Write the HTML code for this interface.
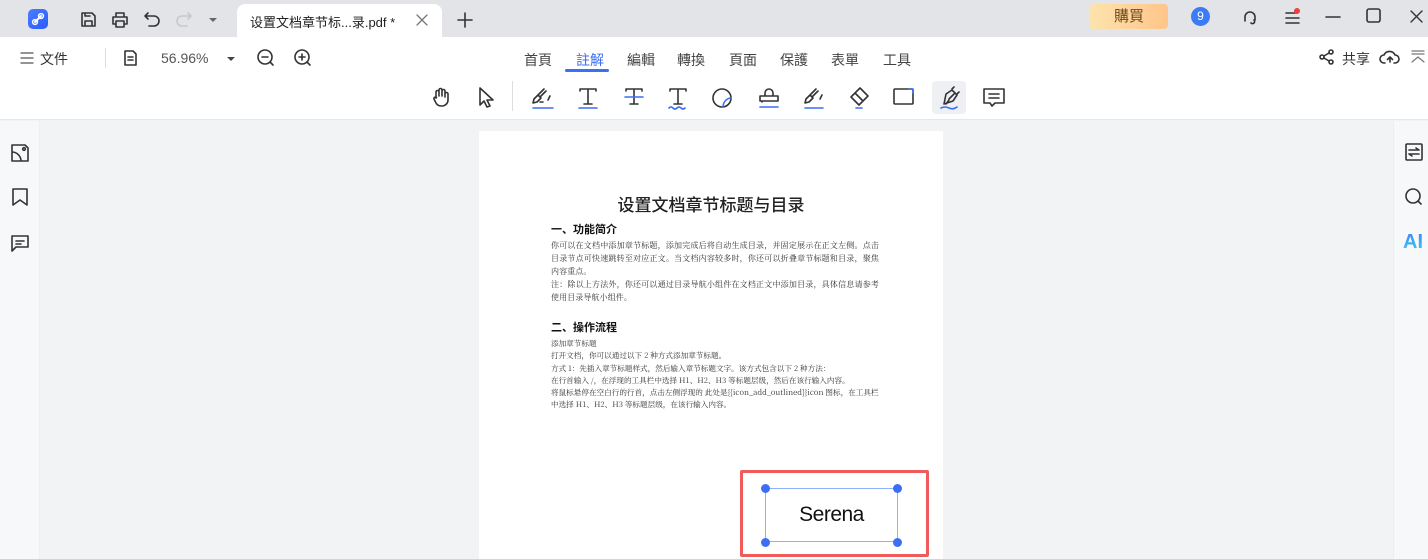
<!DOCTYPE html>
<html><head><meta charset="utf-8"><style>
*{margin:0;padding:0;box-sizing:border-box}
body{width:1428px;height:559px;overflow:hidden;background:#f2f3f5;font-family:"Liberation Sans","Noto Sans CJK SC",sans-serif;position:relative;color:#333}
.abs{position:absolute}
svg{position:absolute;fill:none;stroke:#333;stroke-width:1.6;stroke-linecap:round;stroke-linejoin:round}
.tb{top:0;left:0;width:1428px;height:37px;background:#e3e4e8}
.tab{left:237px;top:4px;width:205px;height:33px;background:#fff;border-radius:8px 8px 0 0;font-size:13px;color:#222;padding:8px 0 0 13px}
.bar{top:37px;left:0;width:1428px;height:83px;background:#fff;border-bottom:1px solid #e6e6e6}
.menu span{position:absolute;top:50px;font-size:14px;color:#444}
.doc{font-family:"Noto Serif CJK SC","Liberation Serif",serif;color:#333}
</style></head><body>
<div class="abs tb"></div>
<div class="abs" style="left:28px;top:9px;width:20px;height:20px;border-radius:5px;background:linear-gradient(135deg,#4a7dff,#2a5bff)"></div>
<svg style="left:28px;top:9px" width="20" height="20"><path d="M7 13 L13 7" stroke="#fff" stroke-width="2"/><circle cx="13" cy="7" r="2.4" stroke="#fff" stroke-width="1.5"/><circle cx="7" cy="13" r="2.4" stroke="#fff" stroke-width="1.5"/></svg>
<svg style="left:80px;top:11px" width="17" height="17"><path d="M2 2h10l3 3v10H2z M5 15v-5h7v5 M5 2v3h5"/></svg>
<svg style="left:111px;top:11px" width="18" height="17"><path d="M5 6V2h8v4 M2 6h14v7h-3 M5 13H2V6 M5 10h8v6H5z"/></svg>
<svg style="left:143px;top:11px" width="18" height="16"><path d="M5 2L2 5l3 3 M2 5h9a5 5 0 010 10H6"/></svg>
<svg style="left:175px;top:11px" width="18" height="16"><path d="M13 2l3 3-3 3 M16 5H7a5 5 0 000 10h5" stroke="#c8c8cc"/></svg>
<div class="abs" style="left:209px;top:18px;border:4px solid transparent;border-top:4px solid #666"></div>
<div class="abs tab">设置文档章节标...录.pdf *</div>
<svg style="left:416px;top:14px" width="12" height="12"><path d="M1 1l10 10M11 1L1 11" stroke="#777" stroke-width="1.3"/></svg>
<svg style="left:456px;top:11px" width="18" height="18"><path d="M9 2v14M2 9h14" stroke-width="1.6"/></svg>
<div class="abs" style="left:1090px;top:4px;width:78px;height:25px;border-radius:4px;background:linear-gradient(90deg,#fde3ac,#ffc58a);font-size:15px;color:#6b4a1e;text-align:center;line-height:25px">購買</div>
<div class="abs" style="left:1191px;top:7px;width:19px;height:19px;border-radius:50%;background:#3b7bf6;color:#fff;font-size:12px;text-align:center;line-height:19px">9</div>
<svg style="left:1241px;top:8px" width="18" height="18"><path d="M4 13V9a5 5 0 0110 0v3 M13 12a2 2 0 01-3 3"/></svg>
<svg style="left:1284px;top:8px" width="18" height="18"><path d="M2 5h10M2 10h13M2 15h13"/></svg>
<div class="abs" style="left:1294px;top:8px;width:6px;height:6px;border-radius:50%;background:#f03e3e"></div>
<svg style="left:1324px;top:8px" width="18" height="18"><path d="M2 9h14"/></svg>
<svg style="left:1366px;top:8px" width="16" height="16"><rect x="1" y="1" width="13" height="13" rx="2"/></svg>
<svg style="left:1410px;top:10px" width="13" height="13"><path d="M1 1l11 11M12 1L1 12" stroke-width="1.4"/></svg>

<div class="abs bar"></div>
<svg style="left:20px;top:51px" width="14" height="14"><path d="M1 2h12M1 7h12M1 12h12" stroke="#555" stroke-width="1.3"/></svg>
<div class="abs" style="left:40px;top:49px;font-size:14px;color:#333">文件</div>
<div class="abs" style="left:105px;top:48px;width:1px;height:20px;background:#ddd"></div>
<svg style="left:123px;top:50px" width="16" height="17"><path d="M2 1h8l3 3v11H2z M5 7h5M5 10h5"/></svg>
<div class="abs" style="left:161px;top:50px;font-size:14px;color:#555">56.96%</div>
<div class="abs" style="left:227px;top:57px;border:4px solid transparent;border-top:4px solid #444"></div>
<svg style="left:256px;top:48px" width="20" height="20"><circle cx="9" cy="9" r="7"/><path d="M6 9h6M14 14l3 3"/></svg>
<svg style="left:293px;top:48px" width="20" height="20"><circle cx="9" cy="9" r="7"/><path d="M6 9h6M9 6v6M14 14l3 3"/></svg>
<div class="menu">
<span style="left:524px">首頁</span><span style="left:576px;color:#3b6ff5">註解</span><span style="left:627px">編輯</span><span style="left:677px">轉換</span><span style="left:729px">頁面</span><span style="left:780px">保護</span><span style="left:831px">表單</span><span style="left:883px">工具</span>
</div>
<div class="abs" style="left:565px;top:69px;width:44px;height:3px;background:#3b6ff5;border-radius:2px"></div>
<svg style="left:1319px;top:49px" width="16" height="17"><circle cx="12" cy="3" r="2"/><circle cx="3" cy="8" r="2"/><circle cx="12" cy="13" r="2"/><path d="M5 7l5-3M5 9l5 3"/></svg>
<div class="abs" style="left:1342px;top:49px;font-size:14px;color:#333">共享</div>
<svg style="left:1379px;top:48px" width="22" height="18"><path d="M6 15H5a4 4 0 010-8 6 6 0 0111 0 4 4 0 010 8h-1 M11 14V9M8.5 11.5L11 9l2.5 2.5"/></svg>
<svg style="left:1411px;top:50px" width="14" height="14"><path d="M1 1h12M1 4h12M1 12l6-5 6 5" stroke="#777" stroke-width="1.2"/></svg>

<svg style="left:430px;top:86px" width="22" height="22"><path d="M6 12V6a1.5 1.5 0 013 0v4V4a1.5 1.5 0 013 0v6V5a1.5 1.5 0 013 0v6V8a1.5 1.5 0 013 0v6a6 6 0 01-6 6h-1a6 6 0 01-5-3l-2-4a1.5 1.5 0 012.5-1.5z"/></svg>
<svg style="left:476px;top:86px" width="20" height="24"><path d="M4 2v17l4-4 3 6 3-1-3-6h6z"/></svg>
<div class="abs" style="left:512px;top:81px;width:1px;height:30px;background:#ddd"></div>
<svg style="left:530px;top:85px" width="26" height="26"><path d="M3 18l4-1 4-4-3-3-4 4z M8 10l6-6M10 12l6-6 M13 17h-3 M18 15l2-4" /><path d="M3 23h20" stroke="#3b6ff5"/></svg>
<svg style="left:576px;top:85px" width="24" height="26"><path d="M4 4h16M12 4v15M8 19h8M4 4v2M20 4v2"/><path d="M3 23h18" stroke="#3b6ff5"/></svg>
<svg style="left:622px;top:85px" width="24" height="26"><path d="M4 4h16M12 4v15M8 19h8M4 4v2M20 4v2"/><path d="M3 12h18" stroke="#3b6ff5"/></svg>
<svg style="left:666px;top:85px" width="24" height="26"><path d="M4 4h16M12 4v15M8 19h8M4 4v2M20 4v2"/><path d="M3 23q2-2 4 0t4 0 4 0 4 0" stroke="#3b6ff5"/></svg>
<svg style="left:711px;top:86px" width="24" height="24"><path d="M20 12a9 9 0 10-9 9c5 0 9-4 9-9"/><path d="M12 21c0-5 4-9 8-9" stroke="#3b6ff5"/></svg>
<svg style="left:756px;top:84px" width="26" height="26"><path d="M9 12V9a4 4 0 118 0v3 M4 12h18v5H4z M6 17v1"/><path d="M4 23h18" stroke="#3b6ff5"/></svg>
<svg style="left:802px;top:85px" width="26" height="26"><path d="M3 18l4-1 4-4-3-3-4 4z M8 10l6-6M10 12l6-6 M18 14l2-4"/><path d="M3 23h18" stroke="#3b6ff5"/></svg>
<svg style="left:847px;top:84px" width="26" height="26"><path d="M4 13l9-9 8 8-9 9z M8 9l8 8"/><path d="M9 24h6" stroke="#3b6ff5"/></svg>
<svg style="left:892px;top:86px" width="24" height="22"><rect x="2" y="3" width="19" height="15" rx="1"/><path d="M17 3h4v4" stroke="#3b6ff5"/></svg>
<div class="abs" style="left:932px;top:81px;width:34px;height:33px;background:#eef0f4;border-radius:4px"></div>
<svg style="left:937px;top:84px" width="26" height="28"><path d="M7 20l2-10 6-4 5 5-4 6z M12 15l5-5 M9 20l3-4 M15 5l2-2 M20 10l2-2"/><path d="M4 24q4-2 8 0t8-1" stroke="#3b6ff5"/></svg>
<svg style="left:981px;top:85px" width="26" height="26"><path d="M3 4h20v14H14l-3 3-2-3H3z M8 9h10M8 13h10"/></svg>

<div class="abs" style="left:0;top:121px;width:40px;height:438px;background:#f7f8fa;border-right:1px solid #eee"></div>
<svg style="left:10px;top:143px" width="20" height="20"><path d="M2 2h13l3 3v13H2z M2 9a9 9 0 019 9"/><circle cx="14" cy="6" r="1.3"/></svg>
<svg style="left:11px;top:187px" width="18" height="20"><path d="M2 2h14v16l-7-5-7 5z"/></svg>
<svg style="left:10px;top:233px" width="20" height="20"><path d="M2 3h16v11H6l-4 4z M6 8h8M6 11h5"/></svg>
<div class="abs" style="left:1393px;top:121px;width:35px;height:438px;background:#f7f8fa;border-left:1px solid #eee"></div>
<svg style="left:1404px;top:142px" width="20" height="20"><rect x="2" y="2" width="16" height="16" rx="1"/><path d="M5 8h10M12 6l3 2M5 12h10M8 14l-3-2"/></svg>
<svg style="left:1404px;top:187px" width="20" height="20"><circle cx="9" cy="9" r="7"/><path d="M14 14l3 3"/></svg>
<div class="abs" style="left:1403px;top:231px;font-size:20px;font-weight:bold;background:linear-gradient(180deg,#3b82ff,#3dd2f2);-webkit-background-clip:text;color:transparent">AI</div>

<div class="abs" style="left:479px;top:131px;width:464px;height:428px;background:#fff"></div>
<div class="abs doc" style="left:479px;top:191px;width:464px;text-align:center;font-size:17px;font-weight:500;font-family:'Noto Sans CJK SC',sans-serif;color:#222">设置文档章节标题与目录</div>
<div class="abs doc" style="left:551px;top:221px;font-size:11px;font-weight:bold;font-family:'Noto Sans CJK SC',sans-serif;color:#111">一、功能简介</div>
<div class="abs doc" style="left:551px;top:239px;width:328px;font-size:8px;line-height:13px;letter-spacing:0.1px;text-align:justify">你可以在文档中添加章节标题，添加完成后将自动生成目录，并固定展示在正文左侧。点击目录节点可快速跳转至对应正文。当文档内容较多时，你还可以折叠章节标题和目录，聚焦内容重点。<br>注：除以上方法外，你还可以通过目录导航小组件在文档正文中添加目录，具体信息请参考使用目录导航小组件。</div>
<div class="abs doc" style="left:551px;top:319px;font-size:11px;font-weight:bold;font-family:'Noto Sans CJK SC',sans-serif;color:#111">二、操作流程</div>
<div class="abs doc" style="left:551px;top:338px;width:328px;font-size:7.6px;line-height:12.3px">添加章节标题<br>打开文档，你可以通过以下 2 种方式添加章节标题。<br>方式 1：先插入章节标题样式，然后输入章节标题文字。该方式包含以下 2 种方法：<br>在行首输入 /，在浮现的工具栏中选择 H1、H2、H3 等标题层级，然后在该行输入内容。<br>将鼠标悬停在空白行的行首，点击左侧浮现的 此处是{{icon_add_outlined}}icon 图标，在工具栏中选择 H1、H2、H3 等标题层级，在该行输入内容。</div>

<div class="abs" style="left:740px;top:470px;width:189px;height:87px;border:3px solid #f15a5a;border-radius:2px"></div>
<div class="abs" style="left:765px;top:488px;width:133px;height:54px;border:1px solid #8fb0ff"></div>
<div class="abs" style="left:761px;top:484px;width:9px;height:9px;border-radius:50%;background:#3b6ff5"></div>
<div class="abs" style="left:893px;top:484px;width:9px;height:9px;border-radius:50%;background:#3b6ff5"></div>
<div class="abs" style="left:761px;top:538px;width:9px;height:9px;border-radius:50%;background:#3b6ff5"></div>
<div class="abs" style="left:893px;top:538px;width:9px;height:9px;border-radius:50%;background:#3b6ff5"></div>
<div class="abs" style="left:765px;top:503px;width:133px;text-align:center;font-size:21px;color:#111;letter-spacing:-0.5px">Serena</div>
</body></html>
